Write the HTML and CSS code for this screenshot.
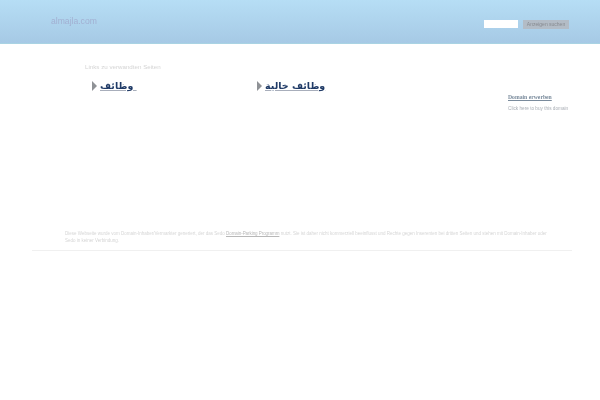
FILE: index.html
```html
<!DOCTYPE html>
<html lang="de">

<head>
    <meta charset="UTF-8">
    <meta name="viewport" content="width=device-width, initial-scale=1.0">
    <title>almajla.com</title>
    <link rel="stylesheet" href="styles.css">
</head>

<body>
    <div class="header">
        <span class="domain">almajla.com</span>
        <form class="search" action="">
            <input class="search_input" type="text">
            <span class="search_btn">Anzeigen suchen</span>
        </form>
    </div>

    <div class="main">
        <div class="links">
            <div class="links_title">Links zu verwandten Seiten</div>
            <div class="links_row">
                <a class="link link_first" href="#"><span class="arrow"></span><span class="link_text" dir="rtl">&nbsp;وظائف</span></a>
                <a class="link" href="#"><span class="arrow"></span><span class="link_text" dir="rtl">وظائف خالية</span></a>
            </div>
        </div>
        <div class="side">
            <a class="side_title" href="#">Domain erwerben</a>
            <div class="side_text">Click here to buy this domain</div>
        </div>
    </div>

    <div class="legal">
        <p>Diese Webseite wurde vom Domain-Inhaber/Vermarkter generiert, der das Sedo <a href="#">Domain-Parking Programm</a> nutzt. Sie ist daher nicht kommerziell beeinflusst und Rechte gegen Inserenten bei dritten Seiten und stehen mit Domain-Inhaber oder Sedo in keiner Verbindung.</p>
    </div>
</body>

</html>
```

FILE: styles.css
```css
* {
    margin: 0;
    padding: 0;
    box-sizing: border-box;
}

body {
    background: #fff;
    font-family: "Liberation Sans", Arial, sans-serif;
    overflow: hidden;
}

.header {
    height: 44px;
    display: flex;
    justify-content: space-between;
    padding: 0 31px 0 51px;
    background: linear-gradient(#b6def5, #a6c9e5);
    border-bottom: 1px solid #a9d3e3;
}

.domain {
    margin-top: 15px;
    font-size: 8.6px;
    line-height: 12px;
    color: #a2b0d2;
    filter: blur(0.3px);
}

.search {
    display: flex;
    column-gap: 5px;
    margin-top: 20px;
    height: 9px;
}

.search_input {
    width: 34px;
    height: 8px;
    border: none;
    background: #fff;
}

.search_btn {
    width: 46px;
    height: 9px;
    background: #b3bcc6;
    color: #868a90;
    font-size: 5px;
    line-height: 9px;
    text-align: center;
    filter: blur(0.3px);
}

.main {
    display: flex;
    justify-content: space-between;
    height: 181px;
    padding: 19px 31px 0 85px;
}

.links_title {
    font-size: 6.2px;
    line-height: 8px;
    color: #d4d4d4;
    filter: blur(0.3px);
}

.links_row {
    display: flex;
    margin: 7px 0 0 7px;
}

.link {
    display: flex;
    align-items: center;
    column-gap: 3px;
    color: #1f3a66;
    font-family: "DejaVu Sans", sans-serif;
    font-size: 9.5px;
    font-weight: bold;
    line-height: 16px;
    text-decoration: none;
}

.link_first {
    width: 165px;
}

.link_text {
    text-decoration: underline;
    text-decoration-color: #a8aebb;
    filter: blur(0.2px);
}

.arrow {
    width: 5px;
    height: 10px;
    background: #8f9296;
    clip-path: polygon(0 0, 100% 50%, 0 100%);
}

.side {
    width: 61px;
    margin-top: 30px;
}

.side_title {
    display: block;
    font-family: "Liberation Serif", serif;
    font-size: 5.7px;
    font-weight: bold;
    line-height: 8px;
    color: #7a8b9c;
    filter: blur(0.2px);
}

.side_text {
    margin-top: 4px;
    font-size: 4.7px;
    line-height: 8px;
    color: #a9aeb5;
    white-space: nowrap;
    filter: blur(0.2px);
}

.legal {
    margin: 0 28px 0 32px;
    padding: 5px 20px 6px 33px;
    border-bottom: 1px solid #f0f0f0;
    font-size: 4.5px;
    line-height: 7px;
    color: #d6d6d6;
    filter: blur(0.2px);
}

.legal a {
    color: #b8b8b8;
    letter-spacing: -0.05px;
}
```
